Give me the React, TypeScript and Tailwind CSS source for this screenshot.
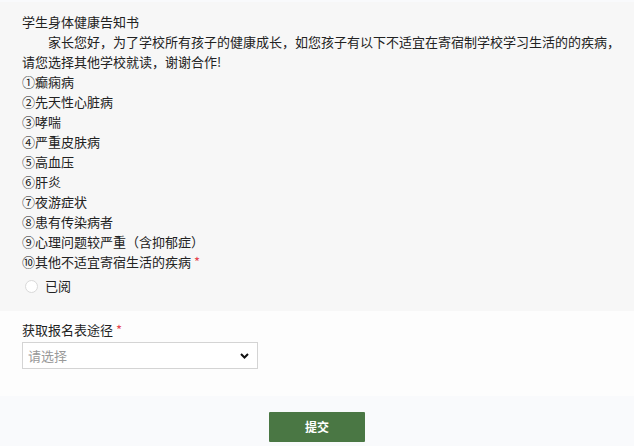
import { useState } from 'react';

const diseases = [
  '①癫痫病',
  '②先天性心脏病',
  '③哮喘',
  '④严重皮肤病',
  '⑤高血压',
  '⑥肝炎',
  '⑦夜游症状',
  '⑧患有传染病者',
  '⑨心理问题较严重（含抑郁症）',
];

export default function App() {
  const [read, setRead] = useState(false);
  const [channel, setChannel] = useState('');

  return (
    <div
      className="min-h-[446px] bg-[#f9fafc] pt-[2px] text-[13px] leading-[20px] text-[#222]"
      style={{ fontFamily: '"Microsoft YaHei", "Noto Sans CJK SC", sans-serif' }}
    >
      {/* Health notice */}
      <section className="bg-[#f7f7f7] pb-[15px] pl-[22px] pr-[10px] pt-[10px]">
        <div>学生身体健康告知书</div>
        <p className="indent-[2em]">
          家长您好，为了学校所有孩子的健康成长，如您孩子有以下不适宜在寄宿制学校学习生活的的疾病，请您选择其他学校就读，谢谢合作!
        </p>
        {diseases.map((d) => (
          <div key={d}>{d}</div>
        ))}
        <div>
          ⑩其他不适宜寄宿生活的疾病 <span className="text-[#e5454f]">*</span>
        </div>
        <label className="mt-[4px] flex cursor-pointer items-center gap-[7px] pl-[3px]">
          <span
            onClick={() => setRead(!read)}
            className="flex h-[13px] w-[13px] items-center justify-center rounded-full border border-[#d9d9d9] bg-white"
          >
            {read && <span className="h-[5px] w-[5px] rounded-full bg-[#4a7744]" />}
          </span>
          <span>已阅</span>
        </label>
      </section>

      {/* Form channel */}
      <section className="bg-[#fdfdfd] px-[22px] pb-[27px] pt-[9px]">
        <div>
          获取报名表途径 <span className="text-[#e5454f]">*</span>
        </div>
        <div className="relative mt-[2px] w-[236px]">
          <select
            value={channel}
            onChange={(e) => setChannel(e.target.value)}
            className="block h-[27px] w-full appearance-none border border-[#d4d4d4] bg-white pl-[5px] text-[13px] text-[#999] outline-none"
          >
            <option value="">请选择</option>
            <option value="school">学校领取</option>
            <option value="online">网上下载</option>
          </select>
          <svg
            className="pointer-events-none absolute right-[9px] top-[11px]"
            width="9"
            height="6"
            viewBox="0 0 9 6"
          >
            <path d="M1 1l3.5 3.5L8 1" fill="none" stroke="#111" strokeWidth="2" />
          </svg>
        </div>
      </section>

      {/* Submit */}
      <div className="flex justify-center pt-[16px]">
        <button className="h-[30px] w-[96px] rounded-[1px] bg-[#4a7744] text-[12px] font-semibold text-white">
          提交
        </button>
      </div>
    </div>
  );
}
